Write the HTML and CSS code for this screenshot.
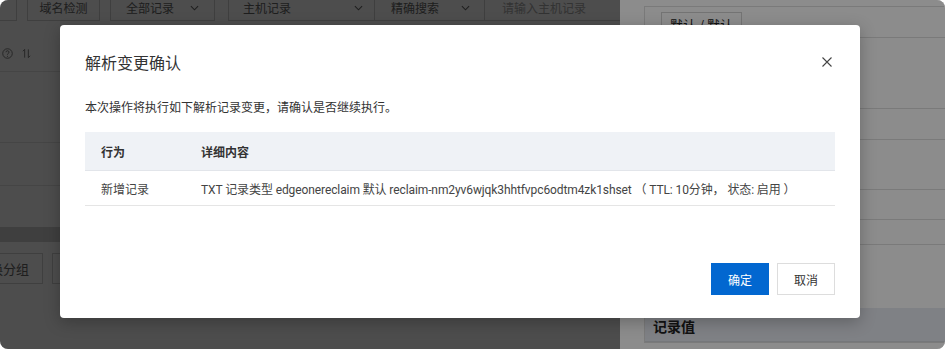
FILE: index.html
```html
<!DOCTYPE html>
<html lang="zh-CN">
<head>
    <meta charset="UTF-8">
    <meta name="viewport" content="width=device-width, initial-scale=1.0">
    <title>解析变更确认</title>
    <link rel="stylesheet" href="styles.css">
</head>
<body>
    <div class="screen">
        <div class="page">
            <div class="toolbar">
                <div class="tool-btn cut"></div>
                <div class="tool-btn check">域名检测</div>
                <div class="tool-btn all">全部记录
                    <svg class="chev" viewBox="0 0 10 6"><polyline points="1,1 5,5 9,1"/></svg>
                </div>
                <div class="search-group">
                    <div class="seg host">主机记录
                        <svg class="chev" viewBox="0 0 10 6"><polyline points="1,1 5,5 9,1"/></svg>
                    </div>
                    <div class="seg exact">精确搜索
                        <svg class="chev" viewBox="0 0 10 6"><polyline points="1,1 5,5 9,1"/></svg>
                    </div>
                    <div class="seg input">请输入主机记录</div>
                </div>
            </div>
            <div class="list-head">
                <svg class="ico" viewBox="0 0 12 12"><circle cx="6" cy="6" r="5.2"/><path d="M4.4 4.6a1.6 1.6 0 1 1 2.2 1.5c-.4.2-.6.5-.6.9v.4"/><circle class="dot" cx="6" cy="9" r=".6"/></svg>
                <svg class="ico sort" viewBox="0 0 12 12"><path d="M4 10.5V1.5L2 3.5M8 1.5v9l2-2"/></svg>
            </div>
            <div class="list-row tall"></div>
            <div class="list-row"></div>
            <div class="spacer"></div>
            <div class="band"></div>
            <div class="bottom-bar">
                <div class="tool-btn group">更换分组</div>
                <div class="tool-btn more"></div>
            </div>
        </div>

        <div class="mask"></div>

        <div class="drawer">
            <div class="card">
                <div class="card-row r1"><span class="line-btn">默认 / 默认</span></div>
                <div class="card-row r2"></div>
                <div class="card-row r3"></div>
                <div class="card-row r4"></div>
                <div class="card-row r5"></div>
                <div class="card-row r6"></div>
                <div class="card-row r7 plain"></div>
                <div class="card-head">记录值</div>
            </div>
        </div>

        <div class="dialog-mask">
            <div class="dialog">
                <div class="dialog-header">
                    <h3>解析变更确认</h3>
                    <button class="close" aria-label="关闭">
                        <svg viewBox="0 0 10 10"><path d="M0.5 0.5l9 9M9.5 0.5l-9 9"/></svg>
                    </button>
                </div>
                <p class="desc">本次操作将执行如下解析记录变更，请确认是否继续执行。</p>
                <table class="change-table">
                    <thead>
                        <tr>
                            <th class="col-action">行为</th>
                            <th>详细内容</th>
                        </tr>
                    </thead>
                    <tbody>
                        <tr>
                            <td>新增记录</td>
                            <td class="detail">TXT 记录类型 edgeonereclaim 默认 reclaim-nm2yv6wjqk3hhtfvpc6odtm4zk1shset （ TTL: 10分钟， 状态: 启用 ）</td>
                        </tr>
                    </tbody>
                </table>
                <div class="dialog-footer">
                    <button class="btn btn-primary">确定</button>
                    <button class="btn">取消</button>
                </div>
            </div>
        </div>
    </div>
</body>
</html>
```

FILE: styles.css
```css
body {
    margin: 0;
    background: #ffffff;
    font-family: "Noto Sans CJK SC", "Noto Sans", sans-serif;
    font-size: 12px;
    color: #333333;
}
.screen {
    position: relative;
    width: 945px;
    height: 349px;
    overflow: hidden;
    border-radius: 8px;
    background: #ffffff;
}

/* page underneath */
.page {
    width: 640px;
}
.toolbar {
    display: flex;
    height: 21px;
}
.tool-btn {
    box-sizing: border-box;
    height: 21px;
    padding-bottom: 5px;
    border: 1px solid #d4d4d4;
    border-top: none;
    display: flex;
    align-items: center;
    justify-content: center;
    color: #666666;
    font-size: 12px;
    line-height: 16px;
}
.tool-btn.cut {
    width: 70px;
    margin-left: -53px;
}
.tool-btn.check {
    width: 73px;
    margin-left: 10px;
}
.tool-btn.all {
    width: 105px;
    margin-left: 10px;
    gap: 16px;
}
.chev {
    width: 9px;
    height: 6px;
    fill: none;
    stroke: #666666;
    stroke-width: 1.2;
}
.search-group {
    display: flex;
    margin-left: 13px;
    flex: 1;
    height: 21px;
    border: 1px solid #d4d4d4;
    border-top: none;
    box-sizing: border-box;
}
.seg {
    box-sizing: border-box;
    display: flex;
    align-items: center;
    padding-bottom: 5px;
    font-size: 12px;
    line-height: 16px;
    color: #666666;
    border-right: 1px solid #d4d4d4;
}
.seg.host {
    width: 146px;
    padding-left: 14px;
    gap: 63px;
}
.seg.exact {
    width: 110px;
    padding-left: 16px;
    gap: 22px;
}
.seg.input {
    flex: 1;
    padding-left: 17px;
    color: #aaaaaa;
    border-right: none;
}
.list-head {
    box-sizing: border-box;
    height: 51px;
    padding: 27px 0 0 2px;
    display: flex;
    gap: 8px;
    border-bottom: 1px solid #e6e6e6;
}
.ico {
    width: 11px;
    height: 11px;
    fill: none;
    stroke: #777777;
    stroke-width: 1;
}
.ico .dot {
    fill: #777777;
    stroke: none;
}
.list-row {
    box-sizing: border-box;
    height: 43px;
    border-bottom: 1px solid #e6e6e6;
}
.list-row.tall {
    height: 71px;
}
.spacer {
    height: 41px;
}
.band {
    height: 15px;
    background: #d2d2d2;
}
.bottom-bar {
    display: flex;
    gap: 9px;
    margin-top: 11px;
}
.tool-btn.group {
    width: 80px;
    height: 31px;
    padding-bottom: 0;
    border-top: 1px solid #d4d4d4;
    margin-left: -37px;
    font-size: 13px;
}
.tool-btn.more {
    width: 70px;
    height: 31px;
    border-top: 1px solid #d4d4d4;
}

/* side drawer */
.mask {
    position: absolute;
    inset: 0;
    background: rgba(0, 0, 0, 0.45);
}
.drawer {
    position: absolute;
    top: 0;
    bottom: 0;
    left: 620px;
    right: 0;
    background: #ffffff;
    padding: 6px 0 0 24px;
}
.card {
    border: 1px solid #dedede;
    border-right: none;
}
.card-row {
    box-sizing: border-box;
    border-bottom: 1px solid #dedede;
    padding-left: 16px;
}
.card-row.r1 { height: 31px; padding-top: 5px; }
.card-row.r2 { height: 71px; }
.card-row.r3 { height: 31px; }
.card-row.r4 { height: 50px; }
.card-row.r5 { height: 30px; }
.card-row.r6 { height: 25px; }
.card-row.r7 { height: 63px; }
.card-row.plain { border-bottom: none; }
.line-btn {
    display: inline-block;
    border: 1px solid #d4d4d4;
    padding: 2px 8px;
    font-size: 13px;
    color: #222222;
}
.card-head {
    height: 33px;
    line-height: 36px;
    padding-left: 8px;
    background: #e7ebf2;
    border-bottom: 1px solid #d6d9df;
    font-size: 14px;
    font-weight: bold;
    color: #222222;
}

/* dialog */
.dialog-mask {
    position: absolute;
    inset: 0;
    background: rgba(0, 0, 0, 0.45);
    padding: 25px 0 0 60px;
}
.dialog {
    box-sizing: border-box;
    width: 800px;
    height: 293px;
    background: #ffffff;
    border-radius: 4px;
    padding: 25px 25px 24px;
    box-shadow: 0 4px 16px rgba(0, 0, 0, 0.25);
}
.dialog-header {
    display: flex;
    justify-content: space-between;
    align-items: center;
    height: 24px;
}
.dialog-header h3 {
    margin: 0;
    font-size: 16px;
    font-weight: normal;
    line-height: 24px;
    color: #333333;
}
.close {
    width: 16px;
    height: 16px;
    padding: 3px;
    border: none;
    background: none;
    cursor: pointer;
}
.close svg {
    display: block;
    width: 10px;
    height: 10px;
    fill: none;
    stroke: #444444;
    stroke-width: 1.1;
}
.desc {
    margin: 23px 0 0;
    line-height: 20px;
    color: #333333;
}
.change-table {
    width: 100%;
    margin-top: 15px;
    border-collapse: collapse;
}
.change-table th {
    height: 38px;
    padding: 0 16px;
    text-align: left;
    background: #eff2f6;
    border-bottom: 1px solid #e2e5ea;
    font-weight: bold;
    color: #333333;
}
.change-table th.col-action {
    width: 68px;
}
.change-table td {
    height: 34px;
    padding: 0 16px;
    border-bottom: 1px solid #e5e5e5;
    font-family: Roboto, "Noto Sans CJK SC", sans-serif;
    color: #444444;
}
.change-table td.detail {
    letter-spacing: -0.1px;
}
.dialog-footer {
    display: flex;
    justify-content: flex-end;
    gap: 8px;
    margin-top: 57px;
}
.btn {
    height: 32px;
    padding: 0 16px;
    border: 1px solid #dddddd;
    background: #ffffff;
    font-family: inherit;
    font-size: 12px;
    color: #333333;
    cursor: pointer;
}
.btn-primary {
    background: #0267d0;
    border-color: #0267d0;
    color: #ffffff;
}
```
